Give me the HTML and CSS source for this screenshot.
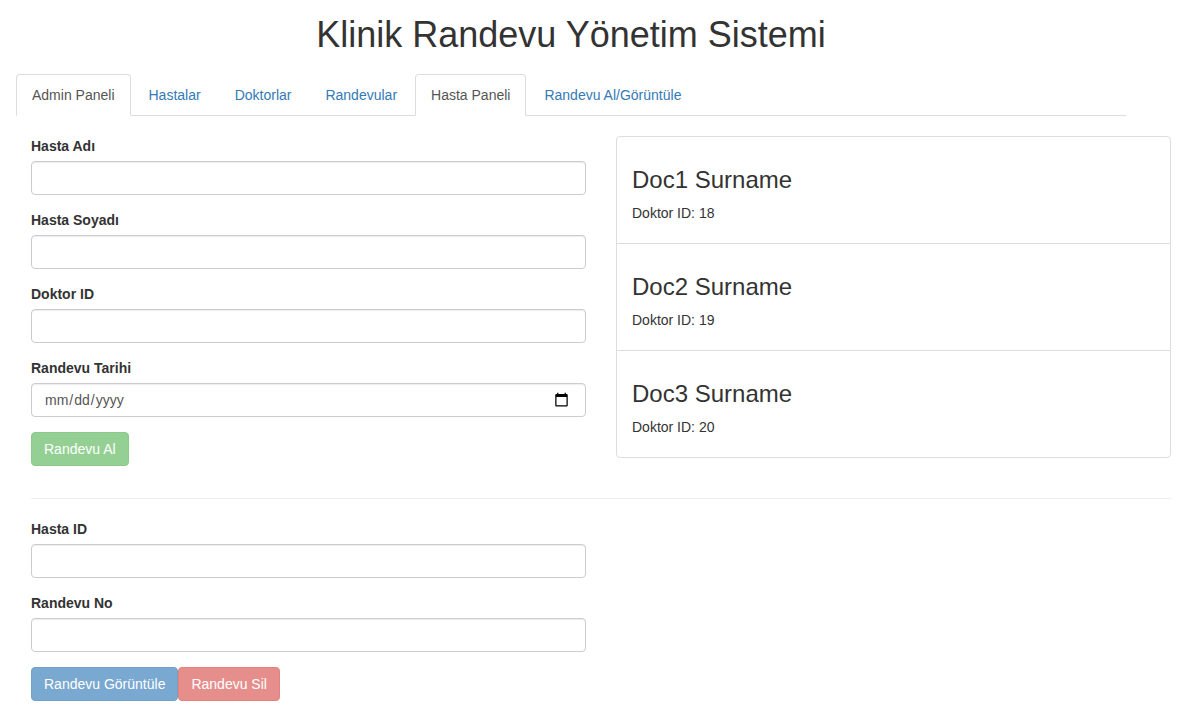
FILE: index.html
```html
<!DOCTYPE html>
<html lang="tr">
<head>
<meta charset="utf-8">
<title>Klinik Randevu Yönetim Sistemi</title>
<link rel="stylesheet" href="styles.css">
</head>
<body>
<main class="container">
  <h1 class="title">Klinik Randevu Yönetim Sistemi</h1>
  <ul class="tabs">
    <li><a class="tab active">Admin Paneli</a></li>
    <li><a class="tab">Hastalar</a></li>
    <li><a class="tab">Doktorlar</a></li>
    <li><a class="tab">Randevular</a></li>
    <li><a class="tab active">Hasta Paneli</a></li>
    <li><a class="tab">Randevu Al/Görüntüle</a></li>
  </ul>
  <div class="row">
    <form class="form">
      <div class="group"><label for="ad">Hasta Adı</label><input id="ad" class="control" type="text"></div>
      <div class="group"><label for="soyad">Hasta Soyadı</label><input id="soyad" class="control" type="text"></div>
      <div class="group"><label for="doktor">Doktor ID</label><input id="doktor" class="control" type="text"></div>
      <div class="group"><label for="tarih">Randevu Tarihi</label><input id="tarih" class="control" type="date"></div>
      <button class="btn success" disabled>Randevu Al</button>
    </form>
    <ul class="list">
      <li class="item"><h3>Doc1 Surname</h3><p>Doktor ID: 18</p></li>
      <li class="item"><h3>Doc2 Surname</h3><p>Doktor ID: 19</p></li>
      <li class="item"><h3>Doc3 Surname</h3><p>Doktor ID: 20</p></li>
    </ul>
  </div>
  <hr class="divider">
  <form class="form lower">
    <div class="group"><label for="hasta">Hasta ID</label><input id="hasta" class="control" type="text"></div>
    <div class="group"><label for="no">Randevu No</label><input id="no" class="control" type="text"></div>
    <div class="actions"><button class="btn primary" disabled>Randevu Görüntüle</button><button class="btn danger" disabled>Randevu Sil</button></div>
  </form>
</main>
</body>
</html>
```
FILE: styles.css
```css
* { box-sizing: border-box; }
body {
  margin: 0;
  font: 14px/20px "Liberation Sans", Arial, sans-serif;
  color: #333;
  background: #fff;
  overflow: hidden;
}
.container { padding: 15px 7px 0 16px; }
.title {
  width: 1110px;
  margin: 0 0 20px;
  font-size: 36px;
  line-height: 39px;
  font-weight: 500;
  text-align: center;
}
.tabs {
  display: flex;
  width: 1110px;
  height: 42px;
  margin: 0;
  padding: 0;
  list-style: none;
  border-bottom: 1px solid #ddd;
}
.tab {
  display: block;
  height: 42px;
  margin-right: 2px;
  padding: 10px 15px;
  border: 1px solid transparent;
  border-radius: 4px 4px 0 0;
  color: #337ab7;
}
.tab.active {
  color: #555;
  background: #fff;
  border-color: #ddd;
  border-bottom-color: transparent;
}
.row {
  display: grid;
  grid-template-columns: 555px 555px;
  gap: 30px;
  padding: 20px 0 0 15px;
}
.form { margin: 0; }
.group { margin-bottom: 15px; }
.group label {
  display: block;
  margin-bottom: 5px;
  font-weight: 700;
}
.control {
  display: block;
  width: 100%;
  height: 34px;
  padding: 6px 12px;
  font: inherit;
  color: #555;
  background: #fff;
  border: 1px solid #ccc;
  border-radius: 4px;
  box-shadow: inset 0 1px 1px rgba(0, 0, 0, .075);
}
.control::-webkit-calendar-picker-indicator {
  width: 15px;
  height: 15px;
  margin-right: 2px;
  margin-bottom: 2px;
  background-size: 15px 15px;
}
.btn {
  height: 34px;
  padding: 6px 12px;
  border: 1px solid;
  border-radius: 4px;
  font: inherit;
  color: #fff;
  opacity: .65;
}
.success { background: #5cb85c; border-color: #4cae4c; }
.primary { background: #337ab7; border-color: #2e6da4; }
.danger { background: #d9534f; border-color: #d43f3a; }
.list {
  align-self: start;
  margin: 0;
  padding: 0;
  list-style: none;
  border: 1px solid #ddd;
  border-radius: 4px;
}
.item { height: 107px; padding: 30px 15px 0; border-bottom: 1px solid #ddd; }
.item:last-child { height: 106px; border-bottom: 0; }
.item h3 {
  margin: 0 0 10px;
  font-size: 24px;
  line-height: 26px;
  font-weight: 500;
}
.item p { margin: 0; }
.divider {
  height: 1px;
  margin: 32px 0 20px 15px;
  border: 0;
  background: #eee;
}
.lower { width: 555px; margin-left: 15px; }
.actions { display: flex; }
```
